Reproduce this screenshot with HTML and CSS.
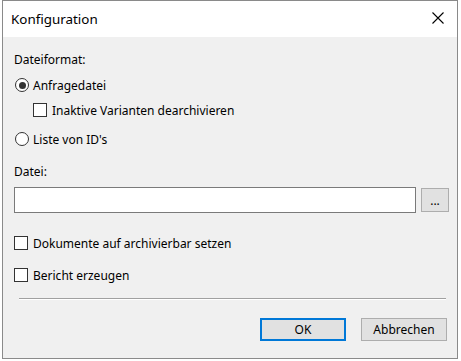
FILE: index.html
```html
<!DOCTYPE html>
<html lang="de">
<head>
    <meta charset="UTF-8">
    <title>Konfiguration</title>
    <link rel="stylesheet" href="styles.css">
</head>
<body>
    <div class="window">
        <div class="titlebar">
            <span class="title">Konfiguration</span>
            <svg class="close" width="12" height="12" viewBox="0 0 12 12">
                <path d="M0.5 0.5 L11.5 11.5 M11.5 0.5 L0.5 11.5" stroke="#000" stroke-width="1.1" fill="none"/>
            </svg>
        </div>
        <div class="content">
            <div class="row label-row">Dateiformat:</div>
            <div class="row radio-row first">
                <span class="radio checked"></span>
                <span>Anfragedatei</span>
            </div>
            <div class="row check-row indent">
                <span class="box"></span>
                <span>Inaktive Varianten dearchivieren</span>
            </div>
            <div class="row radio-row second">
                <span class="radio"></span>
                <span>Liste von ID's</span>
            </div>
            <div class="row label-row datei">Datei:</div>
            <div class="file-row">
                <div class="textbox"></div>
                <div class="browse">...</div>
            </div>
            <div class="row check-row docs">
                <span class="box"></span>
                <span>Dokumente auf archivierbar setzen</span>
            </div>
            <div class="row check-row report">
                <span class="box"></span>
                <span>Bericht erzeugen</span>
            </div>
            <div class="separator"></div>
            <div class="buttons">
                <div class="btn default">OK</div>
                <div class="btn">Abbrechen</div>
            </div>
        </div>
    </div>
</body>
</html>
```

FILE: styles.css
```css
body {
    margin: 0;
    background: #ffffff;
    font-family: "Noto Sans", "Open Sans", sans-serif;
    font-size: 12px;
    color: #000000;
}
.window {
    margin-left: 2px;
    width: 454px;
    height: 357px;
    border: 1px solid #8a8a8a;
    background: #f0f0f0;
    display: flex;
    flex-direction: column;
}
.titlebar {
    height: 36px;
    background: #ffffff;
    display: flex;
    align-items: center;
    justify-content: space-between;
    padding: 0 10px 0 8px;
    flex-shrink: 0;
}
.title {
    font-size: 13.4px;
}
.close {
    margin-right: 3px;
    margin-top: -3px;
}
.content {
    padding: 12px 8px 0 11px;
    display: flex;
    flex-direction: column;
}
.row {
    height: 20px;
    display: flex;
    align-items: center;
}
.radio-row.first {
    margin-top: 6px;
}
.check-row.indent {
    margin-top: 5px;
    padding-left: 19px;
}
.radio-row.second {
    margin-top: 9px;
}
.label-row.datei {
    margin-top: 12px;
}
.radio {
    width: 12px;
    height: 12px;
    border: 1px solid #333333;
    border-radius: 50%;
    background: #ffffff;
    margin: 0 4px 0 1px;
    position: relative;
}
.radio.checked::after {
    content: "";
    position: absolute;
    left: 2.5px;
    top: 2.5px;
    width: 7px;
    height: 7px;
    border-radius: 50%;
    background: #333333;
}
.box {
    width: 12px;
    height: 12px;
    border: 1px solid #333333;
    background: #ffffff;
    margin-right: 5px;
}
.file-row {
    margin-top: 6px;
    height: 26px;
    display: flex;
    align-items: center;
    gap: 5px;
}
.textbox {
    flex-shrink: 0;
    width: 400px;
    height: 24px;
    border: 1px solid #7a7a7a;
    background: #ffffff;
}
.browse {
    flex-shrink: 0;
    box-sizing: border-box;
    width: 28px;
    height: 24px;
    border: 1px solid #adadad;
    background: #e1e1e1;
    display: flex;
    align-items: center;
    justify-content: center;
    line-height: 1;
    padding-top: 2px;
}
.check-row.docs {
    margin-top: 20px;
}
.check-row.report {
    margin-top: 12px;
}
.separator {
    margin: 13px 0 0 5px;
    width: 427px;
    height: 1px;
    background: #a0a0a0;
    border-bottom: 1px solid #ffffff;
}
.buttons {
    margin-top: 18px;
    display: flex;
    justify-content: flex-end;
    gap: 15px;
    margin-right: 2px;
}
.btn {
    width: 84px;
    height: 21px;
    border: 1px solid #adadad;
    background: #e1e1e1;
    display: flex;
    align-items: center;
    justify-content: center;
}
.btn.default {
    border: 2px solid #0078d7;
    width: 82px;
    height: 19px;
}
```
